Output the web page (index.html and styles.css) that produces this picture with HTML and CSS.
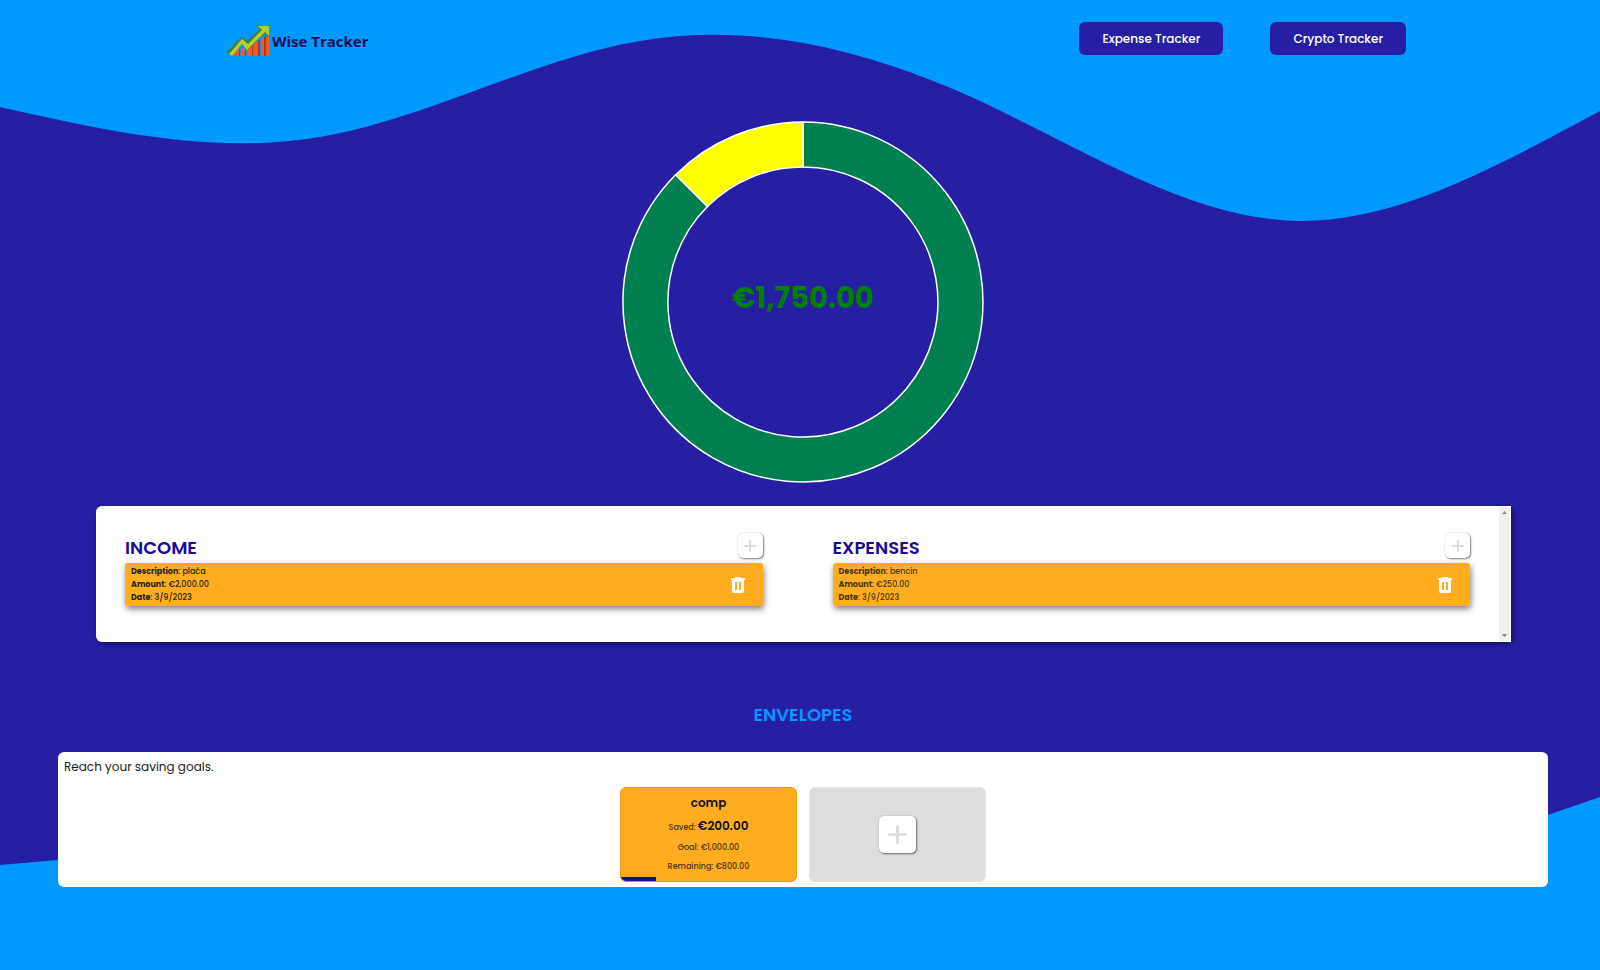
FILE: index.html
```html
<!DOCTYPE html>
<html lang="en">
<head>
<meta charset="utf-8">
<title>Wise Tracker</title>
<link rel="stylesheet" href="styles.css">
</head>
<body>
<svg class="waves" viewBox="0 0 1600 970" preserveAspectRatio="none" aria-hidden="true">
  <path d="M0,107 C107,131 213,155 320,137 C427,119 533,59 640,41 C747,23 853,46 960,92 C1067,139 1173,211 1280,220 C1387,229 1493,168 1600,111 L1600,797 L1548,815 C1300,900 1100,800 800,820 C500,840 300,840 58,860 L0,865 Z"/>
</svg>
<header class="header">
  <a class="brand" href="#">
    <svg class="brand-icon" viewBox="0 0 44 32" aria-hidden="true">
      <path fill="#f15a24" d="M7 31h7v-8l-4 2zM15 31h5v-6l-3-2-2 1zM21 31h6V19l-6 6zM28 31h6V14l-6 5zM35 31h8V10l-8 4z"/>
      <path fill="#b5381c" d="M13 31h2v-8l-2 1zM19 31h2v-6h-2zM26 31h2V19l-2 2zM32 31h2V14l-2 2zM38 31h2V10l-2 2z"/>
      <path fill="#0099ff" d="M14 31h1v-8h-1zM20 31h1v-6h-1zM27 31h1V18h-1zM34 31h1V12h-1z"/>
      <path fill="#4d7a32" d="M1 27L15 12l6 4L34 4l-4-3h4l9 9v2l-5-3-17 16-6-6L5 31z"/>
      <path fill="#b0d136" d="M3 29l13-15 6 5L36 5l-4-4h11v10l-4-4-18 18-5-6L6 31z"/>
    </svg>
    <span>Wise Tracker</span>
  </a>
  <nav class="nav">
    <a class="nav-link" href="#">Expense Tracker</a>
    <a class="nav-link" href="#">Crypto Tracker</a>
  </nav>
</header>
<main class="main">
  <section class="chart">
    <svg class="donut" viewBox="0 0 362 362" aria-hidden="true">
      <g stroke="#fff" stroke-width="1.5">
        <path fill="#008050" d="M181 1A180 180 0 1 1 53.7 53.7L85.5 85.5A135 135 0 1 0 181 46Z"/>
        <path fill="#ff0" d="M53.7 53.7A180 180 0 0 1 181 1V46A135 135 0 0 0 85.5 85.5Z"/>
      </g>
    </svg>
    <p class="balance">€1,750.00</p>
  </section>
  <section class="ledger">
    <div class="ledger-lists">
      <div class="list">
        <div class="list-head">
          <h2 class="title">INCOME</h2>
          <button class="add" type="button" aria-label="Add income"><svg viewBox="0 0 12 12"><path d="M6 1v10M1 6h10"/></svg></button>
        </div>
        <article class="entry">
          <div>
            <p><b>Description</b>: plača</p>
            <p><b>Amount</b>: €2,000.00</p>
            <p><b>Date</b>: 3/9/2023</p>
          </div>
          <button class="remove" type="button" aria-label="Delete income"><svg viewBox="0 0 14 16"><path fill-rule="evenodd" d="M4 1q0-1 1-1h4q1 0 1 1h3q1 0 1 1v1h-1v11q0 2-2 2H3q-2 0-2-2V3H0V2q0-1 1-1zM4 5v8h2V5zM8 5v8h2V5z"/></svg></button>
        </article>
      </div>
      <div class="list expenses">
        <div class="list-head">
          <h2 class="title">EXPENSES</h2>
          <button class="add" type="button" aria-label="Add expense"><svg viewBox="0 0 12 12"><path d="M6 1v10M1 6h10"/></svg></button>
        </div>
        <article class="entry">
          <div>
            <p><b>Description</b>: bencin</p>
            <p><b>Amount</b>: €250.00</p>
            <p><b>Date</b>: 3/9/2023</p>
          </div>
          <button class="remove" type="button" aria-label="Delete expense"><svg viewBox="0 0 14 16"><path fill-rule="evenodd" d="M4 1q0-1 1-1h4q1 0 1 1h3q1 0 1 1v1h-1v11q0 2-2 2H3q-2 0-2-2V3H0V2q0-1 1-1zM4 5v8h2V5zM8 5v8h2V5z"/></svg></button>
        </article>
      </div>
    </div>
    <div class="scrollbar" aria-hidden="true">
      <svg viewBox="0 0 6 4"><path d="M0 4l3-4 3 4z"/></svg>
      <svg viewBox="0 0 6 4"><path d="M0 0l3 4 3-4z"/></svg>
    </div>
  </section>
  <h2 class="title envelopes-title">ENVELOPES</h2>
  <section class="envelopes">
    <p class="intro">Reach your saving goals.</p>
    <div class="cards">
      <article class="card">
        <h3 class="card-name">comp</h3>
        <p class="saved">Saved: <b>€200.00</b></p>
        <p>Goal: €1,000.00</p>
        <p>Remaining: €800.00</p>
        <div class="progress"><div class="progress-fill" style="width: 20%"></div></div>
      </article>
      <div class="card card-new">
        <button class="add add-large" type="button" aria-label="Add envelope"><svg viewBox="0 0 12 12"><path d="M6 1v10M1 6h10"/></svg></button>
      </div>
    </div>
  </section>
</main>
</body>
</html>
```

FILE: styles.css
```css
* {
  box-sizing: border-box;
}

body {
  margin: 0;
  min-height: 100vh;
  position: relative;
  background: #0099ff;
  color: #222;
  font-family: Poppins, Inter, "Open Sans", sans-serif;
}

h2, h3, p {
  margin: 0;
}

button {
  padding: 0;
  border: 0;
  cursor: pointer;
}

.waves {
  position: absolute;
  inset: 0;
  z-index: -1;
  width: 100%;
  height: 100%;
  fill: #271fa3;
}

.header {
  display: flex;
  justify-content: space-between;
  align-items: flex-start;
  padding: 22px 194px 0 226px;
}

.brand {
  display: flex;
  align-items: center;
  gap: 2px;
  margin-top: 3px;
  color: #0b1150;
  font: bold 15px/32px "Open Sans", sans-serif;
  text-decoration: none;
}

.brand-icon {
  width: 44px;
  height: 32px;
}

.nav {
  display: flex;
  gap: 47px;
}

.nav-link {
  padding: 0 23px;
  border-radius: 6px;
  background: #271fa3;
  color: #fff;
  font-size: 12px;
  font-weight: 500;
  line-height: 33px;
  text-decoration: none;
}

.main {
  padding: 64px 52px 82px 58px;
}

.chart {
  display: grid;
  place-items: center;
}

.donut {
  grid-area: 1 / 1;
  width: 362px;
}

.balance {
  grid-area: 1 / 1;
  padding-bottom: 8px;
  color: #008000;
  font-size: 29px;
  font-weight: 700;
  line-height: 40px;
}

.ledger {
  display: flex;
  margin: 23px 37px 0 38px;
  border-radius: 6px 0 0 6px;
  background: #fff;
  box-shadow: 2px 2px 6px rgba(0, 0, 60, 0.6);
}

.ledger-lists {
  flex: 1;
  display: grid;
  grid-template-columns: 1fr 1fr;
  gap: 70px;
  padding: 27px 29px 36px;
}

.list-head {
  display: flex;
  justify-content: space-between;
}

.title {
  color: #180c97;
  font-size: 18px;
  font-weight: 600;
  line-height: 30px;
}

.add {
  width: 25px;
  height: 25px;
  border-radius: 5px;
  background: #fff;
  box-shadow: 1px 1px 2px rgba(0, 0, 0, 0.5), 0 0 1px rgba(0, 0, 0, 0.3);
}

.add svg {
  display: block;
  width: 12px;
  margin: auto;
  fill: none;
  stroke: #ddd;
  stroke-width: 2;
  stroke-linecap: round;
}

.entry {
  display: flex;
  justify-content: space-between;
  align-items: center;
  padding: 2px 18px 2px 6px;
  border-radius: 3px;
  background: #ffad1f;
  box-shadow: 1px 3px 6px rgba(0, 0, 0, 0.5);
  font-size: 8px;
  font-weight: 500;
  line-height: 13px;
}

.entry b {
  font-weight: 700;
}

.expenses .entry {
  color: #4a3517;
}

.remove {
  width: 14px;
  height: 16px;
  background: none;
}

.remove svg {
  display: block;
  fill: #fff;
}

.scrollbar {
  display: flex;
  flex-direction: column;
  justify-content: space-between;
  align-items: center;
  width: 11px;
  margin: 1px 1px 1px 0;
  padding: 4px 0;
  background: #f0f0f0;
}

.scrollbar svg {
  width: 5px;
  fill: #888;
}

.envelopes-title {
  margin-top: 58px;
  color: #0099ff;
  text-align: center;
}

.envelopes {
  margin-top: 22px;
  padding: 5px 6px;
  border-radius: 6px;
  background: #fff;
}

.intro {
  font-size: 12px;
  line-height: 20px;
}

.cards {
  display: flex;
  justify-content: center;
  gap: 12px;
  margin-top: 10px;
}

.card {
  display: flex;
  flex-direction: column;
  align-items: center;
  width: 177px;
  border: 1px solid #e89a12;
  border-radius: 6px;
  background: #ffad1f;
  color: #4a3517;
  font-size: 8px;
  font-weight: 500;
  line-height: 19px;
  overflow: hidden;
}

.card-name,
.saved b {
  color: #111;
  font-size: 12px;
  font-weight: 600;
}

.card-name {
  padding-top: 5px;
  line-height: 20px;
}

.saved {
  padding: 3px 0 1px;
}

.progress {
  width: 100%;
  margin-top: 1px;
}

.progress-fill {
  height: 4px;
  background: #180c97;
}

.card-new {
  justify-content: center;
  border-color: #e4e4e4;
  background: #ddd;
}

.add-large {
  width: 37px;
  height: 37px;
}

.add-large svg {
  width: 19px;
}
```
